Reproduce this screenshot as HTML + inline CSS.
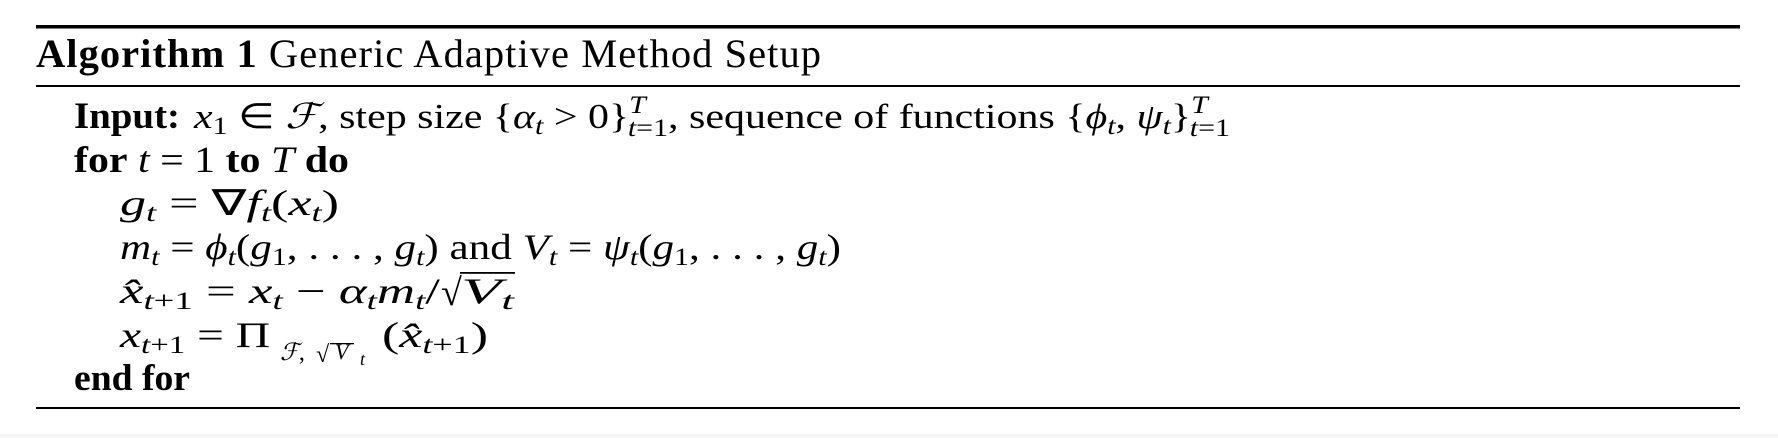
<!DOCTYPE html>
<html><head><meta charset="utf-8"><style>
html,body{margin:0;padding:0;background:#fff;width:1778px;height:438px;overflow:hidden}
svg{display:block}
text{font-family:"Liberation Serif",serif;fill:#000}
.b{font-weight:bold}
.i{font-style:italic}
</style></head><body>
<svg width="1778" height="438" viewBox="0 0 1778 438" xmlns="http://www.w3.org/2000/svg">
<rect x="0" y="434" width="1778" height="4" fill="#f4f4f4"/>
<rect x="36" y="25" width="1704" height="3.5" fill="#000"/>
<rect x="36" y="85" width="1704" height="2" fill="#000"/>
<rect x="36" y="407" width="1704" height="2" fill="#000"/>

<text x="36" y="67" font-size="40.5" textLength="785" lengthAdjust="spacing"><tspan class="b">Algorithm 1</tspan> Generic Adaptive Method Setup</text>

<text x="74" y="128" font-size="37" class="b" textLength="106" lengthAdjust="spacingAndGlyphs">Input:</text>
<text x="194" y="128" font-size="35" textLength="1036" lengthAdjust="spacingAndGlyphs"><tspan class="i">x</tspan><tspan font-size="25" dy="6">1</tspan><tspan dy="-6"> ∈ </tspan><tspan class="i">ℱ</tspan>, step size {<tspan class="i">α</tspan><tspan class="i" font-size="25" dy="6">t</tspan><tspan dy="-6"> &gt; 0}</tspan><tspan class="i" font-size="25" dy="-15">T</tspan><tspan font-size="25" dx="-15" dy="23"><tspan class="i">t</tspan>=1</tspan><tspan dy="-8">, sequence of functions {</tspan><tspan class="i">ϕ</tspan><tspan class="i" font-size="25" dy="6">t</tspan><tspan dy="-6">, </tspan><tspan class="i">ψ</tspan><tspan class="i" font-size="25" dy="6">t</tspan><tspan dy="-6">}</tspan><tspan class="i" font-size="25" dy="-15">T</tspan><tspan font-size="25" dx="-15" dy="23"><tspan class="i">t</tspan>=1</tspan></text>

<text x="74" y="172" font-size="37" textLength="275" lengthAdjust="spacingAndGlyphs"><tspan class="b">for</tspan> <tspan class="i">t</tspan> = 1 <tspan class="b">to</tspan> <tspan class="i">T</tspan> <tspan class="b">do</tspan></text>

<text x="120" y="215" font-size="36" textLength="219" lengthAdjust="spacingAndGlyphs"><tspan class="i">g</tspan><tspan class="i" font-size="25" dy="6">t</tspan><tspan dy="-6"> = ∇</tspan><tspan class="i">f</tspan><tspan class="i" font-size="25" dy="6">t</tspan><tspan dy="-6">(</tspan><tspan class="i">x</tspan><tspan class="i" font-size="25" dy="6">t</tspan><tspan dy="-6">)</tspan></text>

<text x="120" y="259" font-size="36" textLength="721" lengthAdjust="spacingAndGlyphs"><tspan class="i">m</tspan><tspan class="i" font-size="25" dy="6">t</tspan><tspan dy="-6"> = </tspan><tspan class="i">ϕ</tspan><tspan class="i" font-size="25" dy="6">t</tspan><tspan dy="-6">(</tspan><tspan class="i">g</tspan><tspan font-size="25" dy="6">1</tspan><tspan dy="-6">, . . . , </tspan><tspan class="i">g</tspan><tspan class="i" font-size="25" dy="6">t</tspan><tspan dy="-6">) and </tspan><tspan class="i">V</tspan><tspan class="i" font-size="25" dy="6">t</tspan><tspan dy="-6"> = </tspan><tspan class="i">ψ</tspan><tspan class="i" font-size="25" dy="6">t</tspan><tspan dy="-6">(</tspan><tspan class="i">g</tspan><tspan font-size="25" dy="6">1</tspan><tspan dy="-6">, . . . , </tspan><tspan class="i">g</tspan><tspan class="i" font-size="25" dy="6">t</tspan><tspan dy="-6">)</tspan></text>

<text x="120" y="303" font-size="36" textLength="320" lengthAdjust="spacingAndGlyphs"><tspan class="i">x̂</tspan><tspan font-size="25" dy="6"><tspan class="i">t</tspan>+1</tspan><tspan dy="-6"> = </tspan><tspan class="i">x</tspan><tspan class="i" font-size="25" dy="6">t</tspan><tspan dy="-6"> − </tspan><tspan class="i">α</tspan><tspan class="i" font-size="25" dy="6">t</tspan><tspan class="i" dy="-6">m</tspan><tspan class="i" font-size="25" dy="6">t</tspan><tspan dy="-6">/</tspan></text>
<text x="441" y="305" font-size="38">√</text>
<rect x="460" y="272" width="55" height="1.8" fill="#000"/>
<text x="461" y="303" font-size="36" textLength="53" lengthAdjust="spacingAndGlyphs"><tspan class="i">V</tspan><tspan class="i" font-size="25" dy="6">t</tspan></text>

<text x="120" y="347" font-size="36" textLength="150" lengthAdjust="spacingAndGlyphs"><tspan class="i">x</tspan><tspan font-size="25" dy="6"><tspan class="i">t</tspan>+1</tspan><tspan dy="-6"> = Π</tspan></text>
<text x="280" y="360" font-size="24"><tspan class="i">ℱ</tspan>,</text>
<text x="316" y="362" font-size="24">√</text>
<rect x="330" y="343" width="24" height="1.3" fill="#000"/>
<text x="335" y="359" font-size="22" class="i">V</text>
<text x="360" y="365" font-size="18" class="i">t</text>
<text x="382" y="347" font-size="36" textLength="106" lengthAdjust="spacingAndGlyphs">(<tspan class="i">x̂</tspan><tspan font-size="25" dy="6"><tspan class="i">t</tspan>+1</tspan><tspan dy="-6">)</tspan></text>

<text x="74" y="390" font-size="37" class="b" textLength="116" lengthAdjust="spacingAndGlyphs">end for</text>
</svg>
</body></html>
